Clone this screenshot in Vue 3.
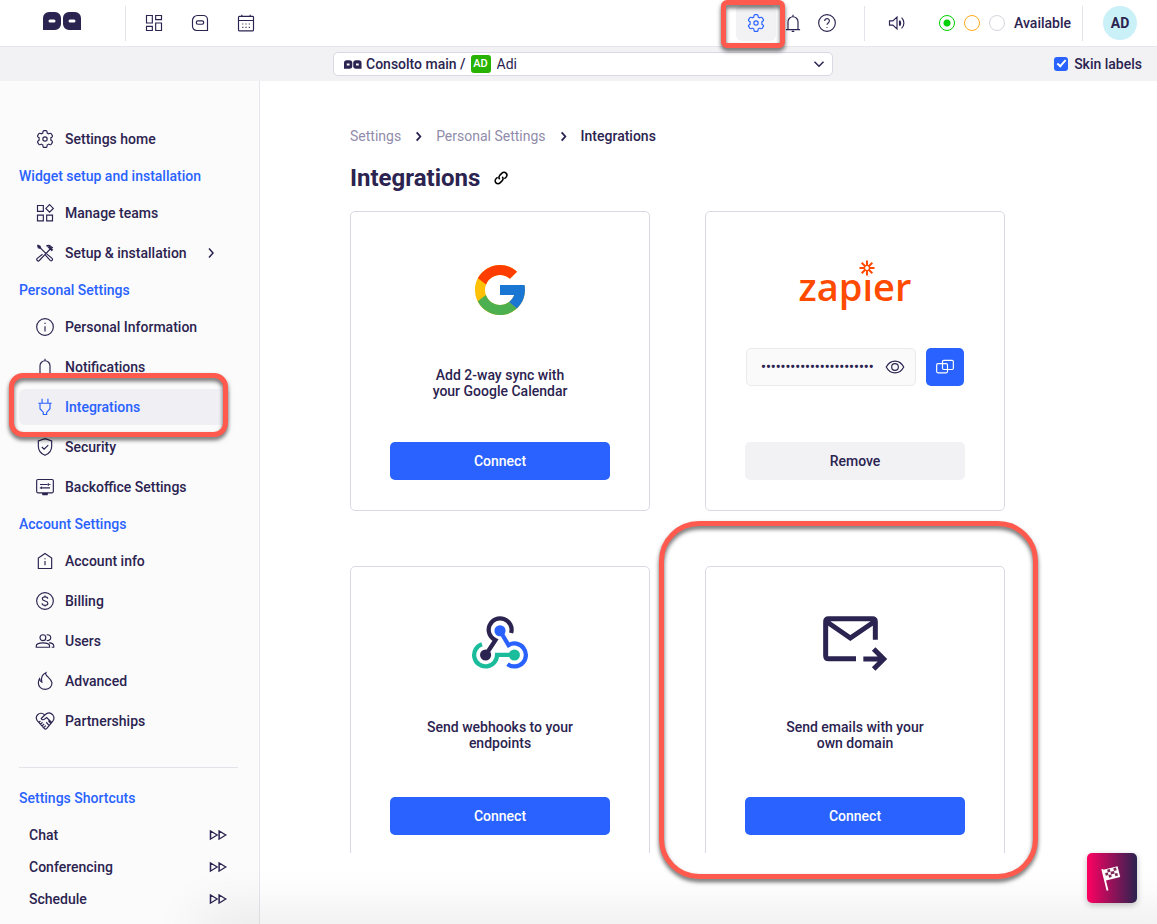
<script setup>
import { ref } from 'vue';

// stroke paths on a 24x24 grid
const icons = {
    gear: 'M9.6 3.2c.1-.7.6-1.200 1.100-1.200h2.600c.55 0 1 .5 1.100 1.200l.3 1.800c.6.200 1.100.5 1.600.9l1.700-.7c.6-.2 1.200 0 1.500.5l1.300 2.200c.3.6.2 1.200-.3 1.600l-1.500 1.100a7.500 7.500 0 0 1 0 2.800l1.500 1.100c.5.4.6 1 .3 1.600l-1.300 2.200c-.3.5-.9.7-1.500.5l-1.700-.7c-.5.4-1 .7-1.600.9l-.3 1.800c-.1.700-.55 1.200-1.100 1.200h-2.600c-.5 0-1-.5-1.100-1.200l-.3-1.800c-.6-.2-1.100-.5-1.600-.9l-1.700.7c-.6.2-1.200 0-1.500-.5l-1.300-2.200c-.3-.6-.2-1.200.3-1.600l1.500-1.100a7.500 7.500 0 0 1 0-2.800l-1.500-1.100c-.5-.4-.6-1-.3-1.600l1.300-2.200c.3-.5.9-.7 1.500-.5l1.700.7c.5-.4 1-.7 1.600-.9zM14.600 12a2.600 2.600 0 1 1-5.200 0 2.600 2.600 0 0 1 5.200 0z',
    grid: 'M3 3h7v9H3zM14 3h7v5h-7zM14 12h7v9h-7zM3 16h7v5H3z',
    box: 'M9 3h7a5 5 0 0 1 5 5v13H8a5 5 0 0 1-5-5V9a6 6 0 0 1 6-6zM9.500 9.500h5a2 2 0 0 1 0 4h-5a2 2 0 0 1 0-4z',
    calendar: 'M4 4h16a1 1 0 0 1 1 1v15a1.500 1.500 0 0 1-1.500 1.500h-15A1.500 1.500 0 0 1 3 20V5a1 1 0 0 1 1-1zM3 9h18M7 2v2.500M17 2v2.500M7.500 13.200h1.300M11.400 13.200h1.300M15.300 13.200h1.300M7.500 17.200h1.300M11.400 17.200h1.300M15.300 17.200h1.300',
    bell: 'M3.500 20h17M6 20v-9.500a6 6 0 0 1 12 0V20M12 4.500V2M10.500 22h3',
    help: 'M12 2a10 10 0 1 1 0 20 10 10 0 0 1 0-20zM9.200 9.500a2.800 2.800 0 1 1 4.500 2.200c-1 .8-1.700 1.200-1.700 2.500M12 16.800v1',
    speaker: 'M3 9.500h4l5-4.500v14l-5-4.500H3zM15 9a4.500 4.500 0 0 1 0 6.500M15 9.500v5M17.500 5.500a9 9 0 0 1 0 13',
    teams: 'M3 3h7v7H3zM17.500 2l4.500 4.500-4.500 4.500L13 6.500zM3 14.500h7v7H3zM14 14.500h7v7h-7z',
    tools: 'M14 13l6.500 5.500a1.500 1.500 0 0 1-2.300 2.300L12.500 14.500M9 13.500l-6.300 5a1.500 1.500 0 0 0 2.500 2.500L18 7.500M3 2.500l3 1.200 1 2.800 6 6M3 2.500l1 3.200 2.500.8M4 3.500l2 2M13.500 3.500c2-1 4-.8 5.500.7l1.500 1.500 1-.7M15 4l5.500 5.500M16.500 4l5 4.500',
    info: 'M12 2a10 10 0 1 1 0 20 10 10 0 0 1 0-20zM12 11v6.500M12 7v1.500',
    plug: 'M8.500 2v5.500M15.500 2v5.500M4 7.500h16M6 7.500V14l4 4.500v2.500h4v-2.500l4-4.500V7.500',
    shield: 'M12 2l8 2.800V11c0 5-3.200 9-8 11-4.800-2-8-6-8-11V4.800zM8.200 12l2.700 2.700 5-5',
    monitor: 'M3.500 3h17A1.500 1.500 0 0 1 22 4.500v13a1.500 1.500 0 0 1-1.500 1.500h-17A1.500 1.500 0 0 1 2 17.500v-13A1.500 1.500 0 0 1 3.500 3zM8.500 20.500h7M9 21.300h6M6 9h9M17 9h1.500M16 7.500v3M9 13h9M5.800 13h1.400M8 11.500v3',
    house: 'M12 3l8 5.500V21H4V8.500zM12 12v5M12 8.800v1',
    dollar: 'M12 2a10 10 0 1 1 0 20 10 10 0 0 1 0-20zM15.300 9.300c-.2-1.400-1.500-2.300-3.300-2.300s-3.200.9-3.200 2.400c0 3.500 6.600 1.700 6.600 5.200 0 1.500-1.400 2.500-3.400 2.500s-3.400-1-3.500-2.500M12 5.500v1.500M12 17v1.500',
    users: 'M9.500 4.500a3.500 3.500 0 1 1 0 7 3.500 3.500 0 0 1 0-7zM14 4.800a3.500 3.500 0 1 1 0 6.400M1.500 19.500v-1.500c0-5 16-5 16 0v1.500zM17 14c3 .4 5.500 1.500 5.500 4v1.500H20',
    flame: 'M13 2c-2 3.500 6.500 6.500 7.300 12 .4 4.500-3 8-7.800 8S4 19 4 14.500c0-2 .4-3.800 1.500-5.300.3 2.500 1.200 3.800 2.700 4.300C7 8.500 8.500 4 13 2z',
    hands: 'M12 5.500C9.500 2 5.500 2 3.200 4.500.8 7 1.300 9.500 2.700 11.500l8.500 9.500c1 1 2 1 2.700 0l7.300-8.500c2-2.500 2-5.500 0-8C18.800 2 15 2 12 4.500L7.500 9c.8 2 3 1.800 4 .8l2.500-2 6 6M16 11.500l2.500 3M13.500 13.500l3 3.500M6.500 12l-2 2M9 13.500L6.500 16M11 15.500L8.500 18M13 17.500l-2.500 2.500',
    chevron: 'M8 3l8 9-8 9',
    down: 'M3 7.500l9 9 9-9',
    forward: 'M2 4l9 8-9 8zM13.500 4l9 8-9 8z',
    link: 'M10.300 13.700a4 4 0 0 1 0-5.200l3-3a3.800 3.800 0 0 1 5.400 5.400L16.500 13M13.700 10.300a4 4 0 0 1 0 5.200l-3 3a3.800 3.800 0 0 1-5.400-5.400L7.500 11',
    eye: 'M1.500 12C6.500 2.500 17.500 2.500 22.500 12 17.500 21.500 6.500 21.500 1.500 12zM12 8a4 4 0 1 1 0 8 4 4 0 0 1 0-8z',
    copy: 'M10.500 4h10A1.500 1.500 0 0 1 22 5.500v8a1.500 1.500 0 0 1-1.500 1.500h-10A1.500 1.500 0 0 1 9 13.500v-8A1.500 1.500 0 0 1 10.500 4zM3.500 8h10A1.500 1.500 0 0 1 15 9.500v8a1.500 1.500 0 0 1-1.500 1.500h-10A1.500 1.500 0 0 1 2 17.500v-8A1.500 1.500 0 0 1 3.500 8z',
};

const groups = [
    {
        title: '',
        items: [{ icon: 'gear', label: 'Settings home' }],
    },
    {
        title: 'Widget setup and installation',
        items: [
            { icon: 'teams', label: 'Manage teams' },
            { icon: 'tools', label: 'Setup & installation', more: true },
        ],
    },
    {
        title: 'Personal Settings',
        items: [
            { icon: 'info', label: 'Personal Information' },
            { icon: 'bell', label: 'Notifications' },
            { icon: 'plug', label: 'Integrations', active: true },
            { icon: 'shield', label: 'Security' },
            { icon: 'monitor', label: 'Backoffice Settings' },
        ],
    },
    {
        title: 'Account Settings',
        items: [
            { icon: 'house', label: 'Account info' },
            { icon: 'dollar', label: 'Billing' },
            { icon: 'users', label: 'Users' },
            { icon: 'flame', label: 'Advanced' },
            { icon: 'hands', label: 'Partnerships' },
        ],
    },
];

const shortcuts = ['Chat', 'Conferencing', 'Schedule'];

const status = ref('available');
const skinLabels = ref(true);
const team = ref('Adi');
const apiKey = ref('abcdefghijklmnopqrstuvw');
const showKey = ref(false);

const copyKey = () => {
    navigator.clipboard?.writeText(apiKey.value);
};
</script>

<template>
  <div class="page">
    <header class="topbar">
      <a href="#" class="logo" aria-label="Home">
        <svg viewBox="0 0 39 18" width="39" height="18">
          <path fill="#2b2350" fill-rule="evenodd" d="M6 0h6a6 6 0 0 1 6 6v6a6 6 0 0 1-6 6H0V6a6 6 0 0 1 6-6zM7 7.500a1.500 1.500 0 0 0 0 3h4a1.500 1.500 0 0 0 0-3zM26 0h6a6 6 0 0 1 6 6v12H26a6 6 0 0 1-6-6V6a6 6 0 0 1 6-6zM27 7.500a1.500 1.500 0 0 0 0 3h4a1.500 1.500 0 0 0 0-3z" />
        </svg>
      </a>
      <span class="divider"></span>
      <nav class="apps">
        <button v-for="name in ['grid', 'box', 'calendar']" :key="name" :aria-label="name">
          <svg class="icon" viewBox="0 0 24 24"><path :d="icons[name]" /></svg>
        </button>
      </nav>
      <div class="tools">
        <button class="current" aria-label="Settings">
          <svg class="icon" viewBox="0 0 24 24"><path :d="icons.gear" /></svg>
          <span class="mark mark-gear"></span>
        </button>
        <button aria-label="Notifications"><svg class="icon" viewBox="0 0 24 24"><path :d="icons.bell" /></svg></button>
        <button aria-label="Help"><svg class="icon" viewBox="0 0 24 24"><path :d="icons.help" /></svg></button>
      </div>
      <span class="divider"></span>
      <button class="sound" aria-label="Sound"><svg class="icon" viewBox="0 0 24 24"><path :d="icons.speaker" /></svg></button>
      <div class="status">
        <input type="radio" name="status" class="green" value="available" v-model="status" aria-label="Available">
        <input type="radio" name="status" class="orange" value="busy" v-model="status" aria-label="Busy">
        <input type="radio" name="status" class="grey" value="offline" v-model="status" aria-label="Offline">
        <span>Available</span>
      </div>
      <span class="divider"></span>
      <button class="avatar">AD</button>
    </header>

    <div class="subbar">
      <div class="team">
        <svg viewBox="0 0 39 18" width="18" height="9">
          <path fill="#2b2350" fill-rule="evenodd" d="M6 0h6a6 6 0 0 1 6 6v6a6 6 0 0 1-6 6H0V6a6 6 0 0 1 6-6zM6 7v4h6V7zM26 0h6a6 6 0 0 1 6 6v12H26a6 6 0 0 1-6-6V6a6 6 0 0 1 6-6zM26 7v4h6V7z" />
        </svg>
        <label for="team">Consolto main /</label>
        <span class="badge">AD</span>
        <select id="team" v-model="team">
          <option>Adi</option>
        </select>
        <svg class="icon arrow" viewBox="0 0 24 24"><path :d="icons.down" /></svg>
      </div>
      <label class="skin">
        <input type="checkbox" v-model="skinLabels">
        Skin labels
      </label>
    </div>

    <div class="body">
      <aside class="sidebar">
        <nav>
          <div v-for="group in groups" :key="group.title">
            <h3 v-if="group.title">{{ group.title }}</h3>
            <div v-for="item in group.items" :key="item.label" class="row">
              <a href="#" class="item" :class="{ active: item.active }">
                <svg class="icon" viewBox="0 0 24 24"><path :d="icons[item.icon]" /></svg>
                <span>{{ item.label }}</span>
                <svg v-if="item.more" class="icon more" viewBox="0 0 24 24"><path :d="icons.chevron" /></svg>
              </a>
              <span v-if="item.active" class="mark mark-item"></span>
            </div>
          </div>
        </nav>
        <hr>
        <h3>Settings Shortcuts</h3>
        <nav class="shortcuts">
          <a v-for="name in shortcuts" :key="name" href="#">
            {{ name }}
            <svg class="icon" viewBox="0 0 24 24"><path :d="icons.forward" /></svg>
          </a>
        </nav>
      </aside>

      <main class="content">
        <nav class="crumbs">
          <a href="#">Settings</a>
          <svg class="icon" viewBox="0 0 24 24"><path :d="icons.chevron" /></svg>
          <a href="#">Personal Settings</a>
          <svg class="icon" viewBox="0 0 24 24"><path :d="icons.chevron" /></svg>
          <span>Integrations</span>
        </nav>
        <div class="title">
          <h1>Integrations</h1>
          <a href="#" aria-label="Link to page"><svg class="icon" viewBox="0 0 24 24"><path :d="icons.link" /></svg></a>
        </div>

        <div class="board">
          <div class="cards">
            <section class="card">
              <div class="brand">
                <svg viewBox="4 4 40 40" width="50" height="50">
                  <path fill="#ffc107" d="M43.611 20.083H42V20H24v8h11.303c-1.649 4.657-6.08 8-11.303 8-6.627 0-12-5.373-12-12s5.373-12 12-12c3.059 0 5.842 1.154 7.961 3.039l5.657-5.657C34.046 6.053 29.268 4 24 4 12.955 4 4 12.955 4 24s8.955 20 20 20 20-8.955 20-20c0-1.341-.138-2.650-.389-3.917z" />
                  <path fill="#ff3d00" d="M6.306 14.691l6.571 4.819C14.655 15.108 18.961 12 24 12c3.059 0 5.842 1.154 7.961 3.039l5.657-5.657C34.046 6.053 29.268 4 24 4 16.318 4 9.656 8.337 6.306 14.691z" />
                  <path fill="#4caf50" d="M24 44c5.166 0 9.860-1.977 13.409-5.192l-6.190-5.238C29.211 35.091 26.715 36 24 36c-5.202 0-9.619-3.317-11.283-7.946l-6.522 5.025C9.505 39.556 16.227 44 24 44z" />
                  <path fill="#1976d2" d="M43.611 20.083H42V20H24v8h11.303c-.792 2.237-2.231 4.166-4.087 5.571l6.193 5.237C36.971 39.205 44 34 44 24c0-1.341-.138-2.650-.389-3.917z" />
                </svg>
              </div>
              <p>Add 2-way sync with<br>your Google Calendar</p>
              <button class="btn primary">Connect</button>
            </section>

            <section class="card">
              <div class="brand">
                <svg viewBox="0 0 120 64" width="120" height="64">
                  <text class="zapier" x="60" y="53" text-anchor="middle">zapier</text>
                  <circle cx="72" cy="20" r="9" fill="#fff" />
                  <path stroke="#ff4a00" stroke-width="2" fill="none" d="M72 12.500v5M72 22.500v5M64.500 20h5M74.500 20h5M66.700 14.700l3.500 3.500M73.800 21.800l3.500 3.500M66.700 25.300l3.500-3.500M73.800 18.200l3.500-3.500" />
                  <circle cx="72" cy="20" r="2.600" fill="none" stroke="#ff4a00" stroke-width="1.400" />
                </svg>
              </div>
              <div class="key">
                <div class="field">
                  <input :type="showKey ? 'text' : 'password'" v-model="apiKey" aria-label="API key" readonly>
                  <button aria-label="Show key" @click="showKey = !showKey"><svg class="icon" viewBox="0 0 24 24"><path :d="icons.eye" /></svg></button>
                </div>
                <button class="copy" aria-label="Copy key" @click="copyKey"><svg class="icon" viewBox="0 0 24 24"><path :d="icons.copy" /></svg></button>
              </div>
              <button class="btn">Remove</button>
            </section>

            <section class="card low">
              <div class="brand">
                <svg viewBox="92 73 176 165" width="58" height="54" fill="none" stroke-width="13">
                  <path stroke="#2b2350" d="M214 125A35 35 0 1 0 166 147L136 192" />
                  <path stroke="#1bbc9b" d="M224 192H171A35 35 0 1 1 125 159" />
                  <path stroke="#2962ff" d="M180 118L206 162A35 35 0 1 1 203 220" />
                  <circle cx="180" cy="118" r="17" fill="#2962ff" />
                  <circle cx="136" cy="192" r="17" fill="#2b2350" />
                  <circle cx="224" cy="192" r="17" fill="#1bbc9b" />
                </svg>
              </div>
              <p>Send webhooks to your<br>endpoints</p>
              <button class="btn primary">Connect</button>
            </section>

            <section class="card low">
              <div class="brand">
                <svg viewBox="518 315 192 165" width="64" height="55" fill="none" stroke="#2b2350" stroke-width="15">
                  <path d="M675 386V332q0-9-9-9H535q-9 0-9 9V434q0 9 9 9H617M526 330L600 381L675 330M639 444H698M670 414L700 444L670 474" />
                </svg>
              </div>
              <p>Send emails with your<br>own domain</p>
              <button class="btn primary">Connect</button>
            </section>
          </div>
          <span class="mark mark-card"></span>
        </div>
      </main>
    </div>

    <div class="fade"></div>
    <button class="flag" aria-label="Getting started">
      <svg viewBox="0 0 24 28" width="22" height="26">
        <g transform="rotate(-14 12 14)">
          <path fill="#fff" d="M3 2h2v24H3zM5 3h16v12H5z" />
          <path fill="#7e2858" d="M9 4h3v3H9zM16 4h3v3h-3zM6 7h3v3H6zM12 7h4v3h-4zM9 10h3v3H9zM16 10h3v3h-3z" />
        </g>
      </svg>
    </button>
  </div>
</template>

<style>
    body {
        margin: 0;
    }
</style>

<style scoped>
    .page {
        display: flex;
        flex-direction: column;
        height: 100vh;
        overflow: hidden;
        position: relative;
        background: #fff;
        color: #2b2350;
        font-family: Roboto, "Liberation Sans", sans-serif;
        font-size: 14px;
        font-weight: 500;
    }

    a {
        color: inherit;
        text-decoration: none;
    }

    button {
        display: flex;
        align-items: center;
        justify-content: center;
        padding: 0;
        border: none;
        background: none;
        color: inherit;
        font: inherit;
        cursor: pointer;
    }

    .icon {
        width: 20px;
        height: 20px;
        flex-shrink: 0;
        fill: none;
        stroke: currentColor;
        stroke-width: 1.4;
    }

    /* red highlight frames */
    .mark {
        position: absolute;
        z-index: 3;
        box-sizing: border-box;
        border: 5px solid #ff5a4d;
        filter: drop-shadow(0 3px 2px rgba(0, 0, 0, 0.6));
        pointer-events: none;
    }
    .mark-gear {
        left: -15px;
        top: -5px;
        width: 64px;
        height: 48px;
        border-radius: 6px;
    }
    .mark-item {
        left: -10px;
        right: 10px;
        top: -14px;
        height: 64px;
        border-radius: 14px;
    }
    .mark-card {
        left: 309px;
        top: 310px;
        width: 379px;
        height: 358px;
        border-radius: 40px;
    }

    .topbar {
        display: flex;
        align-items: center;
        height: 46px;
        padding: 0 20px 0 43px;
        border-bottom: 1px solid #e6e6ec;
    }
    .logo {
        display: flex;
        margin: 0 43px 4px 0;
    }
    .divider {
        width: 1px;
        height: 35px;
        background: #e3e3ea;
    }
    .apps {
        display: flex;
        margin-left: 5px;
    }
    .apps button {
        width: 46px;
        height: 36px;
    }
    .tools {
        display: flex;
        margin: 0 20px 0 auto;
    }
    .tools button,
    .sound {
        width: 34px;
        height: 36px;
    }
    .tools .current {
        position: relative;
        width: 40px;
        border-radius: 6px;
        background: #f2f2f5;
        color: #2962ff;
    }
    .sound {
        margin: 0 25px 0 15px;
    }
    .status {
        display: flex;
        align-items: center;
        gap: 9px;
        margin-right: 11px;
    }
    .status input {
        appearance: none;
        box-sizing: border-box;
        width: 16px;
        height: 16px;
        margin: 0;
        border: 1px solid;
        border-radius: 50%;
    }
    .status input:checked {
        background: radial-gradient(circle, currentColor 3px, transparent 4px);
    }
    .green {
        color: #00d100;
    }
    .orange {
        color: #ffab1a;
    }
    .grey {
        color: #d5d5de;
    }
    .avatar {
        width: 34px;
        height: 34px;
        margin-left: 20px;
        border-radius: 50%;
        background: #caf0f8;
        font-weight: 700;
    }

    .subbar {
        display: grid;
        grid-template-columns: 1fr minmax(300px, 500px) 1fr;
        align-items: center;
        height: 34px;
        padding: 0 15px 0 24px;
        background: #f2f2f5;
    }
    .team {
        position: relative;
        grid-column: 2;
        display: flex;
        align-items: center;
        gap: 4px;
        box-sizing: border-box;
        height: 24px;
        padding: 0 7px 0 10px;
        border: 1px solid #d9d9e3;
        border-radius: 5px;
        background: #fff;
    }
    .badge {
        width: 20px;
        margin: 0 2px 0 1px;
        border-radius: 3px;
        background: #27b300;
        color: #fff;
        font-size: 11px;
        line-height: 18px;
        text-align: center;
    }
    select {
        flex: 1;
        appearance: none;
        padding: 0;
        border: none;
        background: none;
        color: inherit;
        font: inherit;
        font-weight: 400;
    }
    .arrow {
        width: 12px;
        height: 12px;
        stroke-width: 3;
    }
    .skin {
        display: flex;
        align-items: center;
        gap: 6px;
        justify-self: end;
    }
    .skin input {
        appearance: none;
        display: flex;
        justify-content: center;
        width: 14px;
        height: 14px;
        margin: 0;
        border-radius: 3px;
        background: #2962ff;
    }
    .skin input:checked::before {
        content: "";
        width: 3px;
        height: 7px;
        margin-top: 1px;
        border: solid #fff;
        border-width: 0 2px 2px 0;
        transform: rotate(42deg);
    }

    .body {
        display: flex;
        flex: 1;
        min-height: 0;
    }
    .sidebar {
        flex-shrink: 0;
        box-sizing: border-box;
        width: 260px;
        padding: 38px 21px 0 19px;
        border-right: 1px solid #e6e6ec;
        background: #fbfbfb;
    }
    h3 {
        margin: 0;
        color: #2962ff;
        font-size: 14px;
        font-weight: 500;
        line-height: 34px;
    }
    .row {
        position: relative;
        padding: 2px 8px 2px 0;
    }
    .item {
        display: flex;
        align-items: center;
        gap: 10px;
        height: 36px;
        padding-left: 16px;
        border-radius: 6px;
    }
    .item.active {
        background: #efeff4;
        color: #2962ff;
    }
    .more {
        width: 12px;
        height: 12px;
        margin-left: 8px;
        stroke-width: 3;
    }
    hr {
        margin: 26px 0 13px;
        border: none;
        border-top: 1px solid #e3e3ea;
    }
    .shortcuts {
        padding: 4px 11px 0 10px;
    }
    .shortcuts a {
        display: flex;
        align-items: center;
        justify-content: space-between;
        height: 32px;
    }
    .shortcuts .icon {
        width: 18px;
        height: 18px;
        stroke-width: 2;
    }
    .shortcuts path {
        transform: scaleY(0.7);
        transform-origin: center;
    }

    .content {
        flex: 1;
        display: flex;
        flex-direction: column;
        min-width: 0;
        padding: 45px 0 71px 90px;
    }
    .crumbs {
        display: flex;
        align-items: center;
        gap: 12px;
        line-height: 20px;
    }
    .crumbs a {
        color: #908caa;
        font-weight: 400;
    }
    .crumbs .icon {
        width: 11px;
        height: 11px;
        stroke-width: 4;
    }
    .title {
        display: flex;
        align-items: center;
        gap: 12px;
        margin: 16px 0 17px;
    }
    h1 {
        margin: 0;
        font-size: 24px;
        font-weight: 700;
        line-height: 32px;
    }
    .title a {
        display: flex;
        color: #000;
    }
    .title .icon {
        width: 18px;
        height: 18px;
        stroke-width: 2;
    }

    .board {
        position: relative;
        flex: 1;
        min-height: 0;
    }
    .cards {
        display: grid;
        grid-template-columns: repeat(auto-fill, 300px);
        gap: 55px;
        height: 100%;
        overflow: hidden;
        align-content: start;
    }
    .card {
        display: flex;
        flex-direction: column;
        box-sizing: border-box;
        height: 300px;
        padding: 0 39px 30px;
        border: 1px solid #d9d9e3;
        border-radius: 5px;
    }
    .brand {
        flex: 1;
        display: flex;
        align-items: center;
        justify-content: center;
    }
    .zapier {
        fill: #ff4a00;
        font-family: "Open Sans", sans-serif;
        font-size: 38px;
        font-weight: 600;
    }
    .card p {
        margin: 0 0 43px;
        line-height: 16px;
        text-align: center;
    }
    .card.low p {
        margin-bottom: 46px;
    }
    .btn {
        height: 38px;
        border-radius: 5px;
        background: #f2f2f5;
    }
    .btn.primary {
        background: #2962ff;
        color: #fff;
    }
    .key {
        display: flex;
        gap: 10px;
        margin: 0 1px 56px;
    }
    .field {
        flex: 1;
        display: flex;
        align-items: center;
        gap: 10px;
        box-sizing: border-box;
        height: 38px;
        min-width: 0;
        padding: 0 10px 0 14px;
        border: 1px solid #ebebef;
        border-radius: 5px;
        background: #fafafa;
    }
    .field input {
        flex: 1;
        min-width: 0;
        padding: 0;
        border: none;
        outline: none;
        background: none;
        color: inherit;
        font: inherit;
    }
    .copy {
        width: 38px;
        height: 38px;
        border-radius: 5px;
        background: #2962ff;
        color: #fff;
    }

    .fade {
        position: absolute;
        left: 200px;
        right: -40px;
        bottom: -10px;
        height: 10px;
        box-shadow: 0 0 50px rgba(0, 0, 0, 0.3);
        pointer-events: none;
    }
    .flag {
        position: absolute;
        right: 20px;
        bottom: 21px;
        width: 50px;
        height: 50px;
        border-radius: 5px;
        background: linear-gradient(90deg, #ff0062, #2b2350);
        box-shadow: 0 2px 6px rgba(0, 0, 0, 0.25);
    }
</style>
